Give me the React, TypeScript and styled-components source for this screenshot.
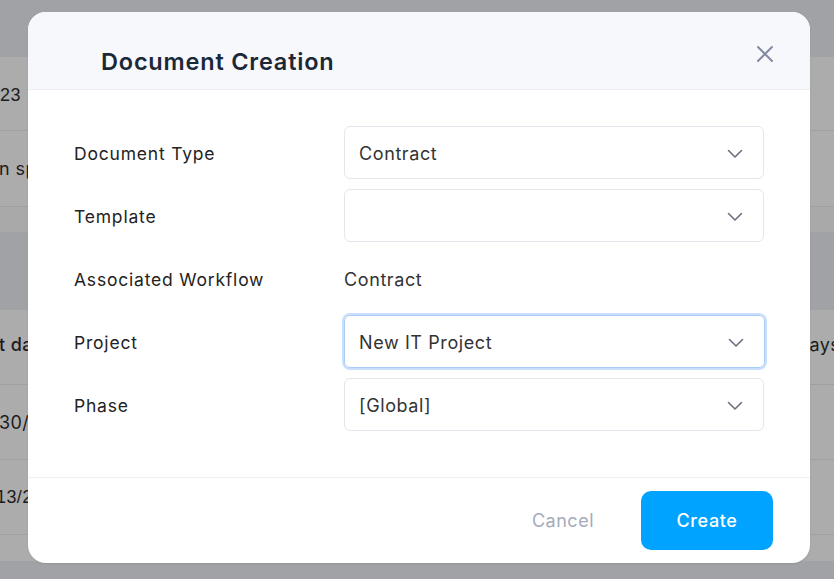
import styled, { createGlobalStyle } from "styled-components";

const GlobalStyle = createGlobalStyle`
  html, body, #root {
    margin: 0;
    padding: 0;
    height: 100%;
    overflow: hidden;
  }
  body {
    font-family: Inter, "Noto Sans", sans-serif;
  }
`;

const Page = styled.div`
  position: relative;
  width: 834px;
  height: 579px;
  background: #a0a2a6;
  display: flex;
  flex-direction: column;
`;

const TopBar = styled.div`
  height: 57px;
  flex-shrink: 0;
`;

const Section = styled.div`
  display: flex;
  flex-direction: column;
  background: #acacac;
`;

const Spacer = styled.div<{ $h: number }>`
  height: ${(p) => p.$h}px;
  flex-shrink: 0;
`;

const BgRow = styled.div<{ $h: number; $line?: boolean; $tint?: string }>`
  height: ${(p) => p.$h}px;
  display: flex;
  justify-content: space-between;
  align-items: center;
  border-bottom: ${(p) => (p.$line ? "1px solid #a0a0a0" : "none")};
  background: ${(p) => p.$tint ?? "transparent"};
  box-sizing: border-box;
`;

const EdgeCell = styled.div<{ $arial?: boolean; $bold?: boolean; $up?: number }>`
  width: 28px;
  overflow: hidden;
  display: flex;
  white-space: nowrap;
  font-family: ${(p) => (p.$arial ? '"Liberation Sans", Arial, sans-serif' : "Inter, sans-serif")};
  font-weight: ${(p) => (p.$bold ? 500 : 400)};
  font-size: 18px;
  color: #1c1c1c;
  letter-spacing: 0.4px;
  margin-top: ${(p) => -(p.$up ?? 0)}px;
`;

const Shift = styled.span<{ $x: number }>`
  margin-left: ${(p) => p.$x}px;
`;

const Modal = styled.div`
  position: absolute;
  left: 28px;
  top: 12px;
  width: 782px;
  height: 551px;
  border-radius: 18px;
  background: #ffffff;
  overflow: hidden;
  display: flex;
  flex-direction: column;
  box-shadow: 0 1px 2px rgba(0, 0, 0, 0.08);
`;

const Header = styled.div`
  height: 78px;
  flex-shrink: 0;
  background: #f7f8fc;
  border-bottom: 1px solid #eceef3;
  display: flex;
  align-items: center;
  justify-content: space-between;
  padding: 22px 36px 0 73px;
  box-sizing: border-box;
`;

const Title = styled.h2`
  margin: 0;
  font-size: 23.5px;
  font-weight: 600;
  color: #1b2837;
  letter-spacing: 0.8px;
`;

const CloseButton = styled.button`
  border: 0;
  background: none;
  padding: 0;
  width: 18px;
  height: 18px;
  display: flex;
  align-items: center;
  justify-content: center;
  margin-top: -16px;
  cursor: pointer;
`;

const Body = styled.div`
  flex: 1;
  padding: 36px 46px 0 46px;
  display: grid;
  grid-template-columns: 270px 420px;
  grid-auto-rows: 53px;
  row-gap: 10px;
  align-content: start;
  border-bottom: 1px solid #eff0f3;
`;

const Label = styled.div`
  display: flex;
  align-items: center;
  padding-top: 2px;
  font-size: 17.5px;
  color: #232323;
  letter-spacing: 0.8px;
`;

const Value = styled.div`
  display: flex;
  align-items: center;
  padding-top: 2px;
  font-size: 18px;
  color: #333333;
  letter-spacing: 0.6px;
`;

const Select = styled.div<{ $focused?: boolean }>`
  display: flex;
  align-items: center;
  justify-content: space-between;
  padding: 2px 20px 0 14px;
  border: 1px solid ${(p) => (p.$focused ? "#a9ccf6" : "#e4e6ed")};
  box-shadow: ${(p) => (p.$focused ? "0 0 0 2px #c9dffb" : "none")};
  border-radius: 6px;
  font-size: 18px;
  color: #333333;
  letter-spacing: 0.6px;
  box-sizing: border-box;
  width: ${(p) => (p.$focused ? "421px" : "420px")};
`;

const Footer = styled.div`
  height: 85px;
  flex-shrink: 0;
  display: flex;
  align-items: center;
  justify-content: flex-end;
  gap: 47px;
  padding-right: 37px;
`;

const CancelButton = styled.button`
  border: 0;
  background: none;
  font-family: inherit;
  font-size: 18px;
  letter-spacing: 0.5px;
  color: #a6aabd;
  padding: 0;
  cursor: pointer;
`;

const CreateButton = styled.button`
  border: 0;
  width: 132px;
  height: 59px;
  border-radius: 10px;
  background: #00a3ff;
  color: #ffffff;
  font-family: inherit;
  font-size: 18px;
  font-weight: 500;
  letter-spacing: 0.6px;
  cursor: pointer;
`;

function Chevron() {
  return (
    <svg width="16" height="10" viewBox="0 0 16 10" fill="none">
      <path d="M1.5 1.5 L8 8 L14.5 1.5" stroke="#6b7080" strokeWidth="1.6" strokeLinecap="round" strokeLinejoin="round" />
    </svg>
  );
}

function CloseIcon() {
  return (
    <svg width="18" height="18" viewBox="0 0 18 18" fill="none">
      <path d="M2 2 L16 16 M16 2 L2 16" stroke="#858aa3" strokeWidth="2" strokeLinecap="round" />
    </svg>
  );
}

const fields: { label: string; value: string; kind: "select" | "text"; focused?: boolean }[] = [
  { label: "Document Type", value: "Contract", kind: "select" },
  { label: "Template", value: "", kind: "select" },
  { label: "Associated Workflow", value: "Contract", kind: "text" },
  { label: "Project", value: "New IT Project", kind: "select", focused: true },
  { label: "Phase", value: "[Global]", kind: "select" },
];

export default function App() {
  return (
    <>
      <GlobalStyle />
      <Page>
        <TopBar />
        <Section>
          <BgRow $h={74} $line>
            <EdgeCell $arial $up={-4}>
              <Shift $x={0}>23</Shift>
            </EdgeCell>
            <EdgeCell />
          </BgRow>
          <BgRow $h={76} $line>
            <EdgeCell>
              <Shift $x={-1}>n spec</Shift>
            </EdgeCell>
            <EdgeCell />
          </BgRow>
          <BgRow $h={25} $tint="#a9a9aa" />
        </Section>
        <Spacer $h={78} />
        <Section>
          <BgRow $h={75} $line>
            <EdgeCell $bold $up={6}>
              <Shift $x={-1}>t date</Shift>
            </EdgeCell>
            <EdgeCell $up={6}>
              <Shift $x={-10}>Days</Shift>
            </EdgeCell>
          </BgRow>
          <BgRow $h={75} $line>
            <EdgeCell>
              <Shift $x={-1}>30/2023</Shift>
            </EdgeCell>
            <EdgeCell />
          </BgRow>
          <BgRow $h={75} $line>
            <EdgeCell $arial>
              <Shift $x={-4}>13/2023</Shift>
            </EdgeCell>
            <EdgeCell />
          </BgRow>
          <BgRow $h={26} />
        </Section>

        <Modal>
          <Header>
            <Title>Document Creation</Title>
            <CloseButton aria-label="Close">
              <CloseIcon />
            </CloseButton>
          </Header>
          <Body>
            {fields.map((f) => [
              <Label key={f.label + "-l"}>{f.label}</Label>,
              f.kind === "select" ? (
                <Select key={f.label + "-v"} $focused={f.focused}>
                  <span>{f.value}</span>
                  <Chevron />
                </Select>
              ) : (
                <Value key={f.label + "-v"}>{f.value}</Value>
              ),
            ])}
          </Body>
          <Footer>
            <CancelButton>Cancel</CancelButton>
            <CreateButton>Create</CreateButton>
          </Footer>
        </Modal>
      </Page>
    </>
  );
}
